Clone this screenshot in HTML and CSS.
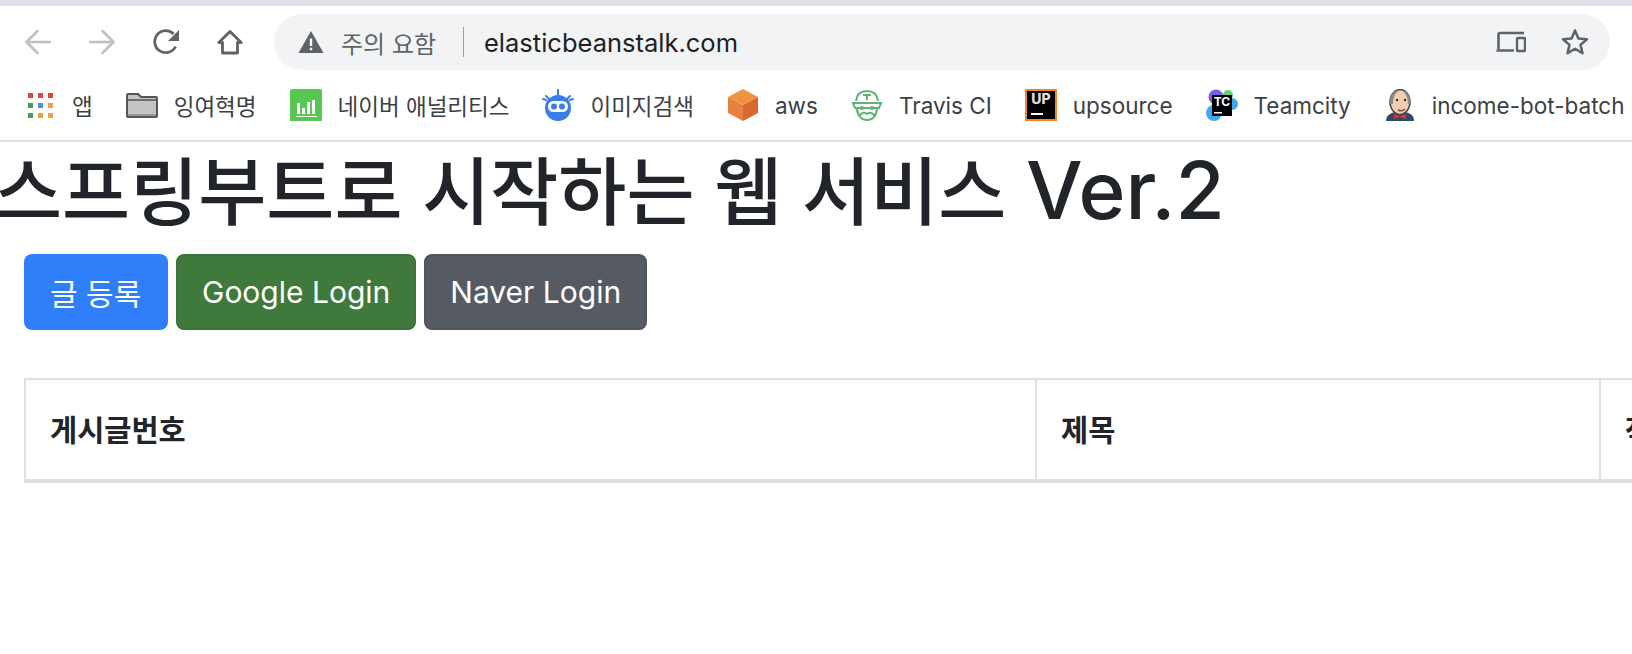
FILE: index.html
```html
<!DOCTYPE html>
<html lang="ko">
  <head>
    <title>스프링부트로 시작하는 웹 서비스 Ver.2</title>
    <meta name="viewport" content="width=device-width, initial-scale=1.0">
    <link rel="stylesheet" href="styles.css">
  </head>
  <body>
    <div class="tabstrip"></div>
    <!-- address bar -->
    <div class="toolbar">
      <div class="navbtns">
        <svg class="navicon" viewBox="0 0 26 26"><path d="M25 13H2M12.5 2 1.5 13l11 11" fill="none" stroke="#bfc0c2" stroke-width="2.6" stroke-linecap="round" stroke-linejoin="round"/></svg>
        <svg class="navicon" viewBox="0 0 26 26"><path d="M1 13h23M13.5 2l11 11-11 11" fill="none" stroke="#bfc0c2" stroke-width="2.6" stroke-linecap="round" stroke-linejoin="round"/></svg>
        <svg class="navicon" viewBox="0 0 26 26"><path d="M22.6 17.5A11 11 0 1 1 20.6 5" fill="none" stroke="#5f6368" stroke-width="2.8"/><path d="M26 1v11H15z" fill="#5f6368"/></svg>
        <svg class="navicon" viewBox="0 0 26 26"><path d="M13 2.5 1.8 13.5h3.7V24h15V13.5h3.7zM13 2.5" fill="none" stroke="#5f6368" stroke-width="2.8" stroke-linejoin="round"/></svg>
      </div>
      <div class="omnibox">
        <svg class="warnicon" viewBox="0 0 26 24"><path d="M13 1 .5 23h25z" fill="#5f6368"/><path d="M11.8 8.5h2.4v7.5h-2.4zM11.8 17.8h2.4v2.4h-2.4z" fill="#fff"/></svg>
        <span class="warntext">주의 요함</span>
        <span class="urlsep"></span>
        <span class="urltext">elasticbeanstalk.com</span>
        <svg class="devicon" viewBox="0 0 30 24"><path d="M2.500 19V4.500a1.500 1.500 0 0 1 1.500-1.500h24M.5 20.500h17.500" fill="none" stroke="#5f6368" stroke-width="2.600"/><rect x="21" y="8" width="8" height="13" rx="1" fill="none" stroke="#5f6368" stroke-width="2.400"/></svg>
        <svg class="staricon" viewBox="0 0 28 28"><path d="m14 2.500 3.400 8 8.600.7-6.500 5.700 2 8.400-7.500-4.500-7.500 4.500 2-8.400L2 11.200l8.600-.7z" fill="none" stroke="#5f6368" stroke-width="2.500" stroke-linejoin="round"/></svg>
      </div>
    </div>
    <!-- bookmarks -->
    <div class="bookmarks">
      <div class="bmitem">
        <svg class="bmicon" viewBox="0 0 32 32">
          <path d="M4 4h5v5H4z M14 4h5v5h-5z M24 4h5v5h-5z" fill="#e2453c"/>
          <path d="M4 14h5v5H4z" fill="#4d9b5c"/><path d="M14 14h5v5h-5z" fill="#4a8ff0"/><path d="M24 14h5v5h-5z" fill="#e8a33d"/>
          <path d="M4 24h5v5H4z" fill="#4d9b5c"/><path d="M14 24h5v5h-5z" fill="#e8a33d"/><path d="M24 24h5v5h-5z" fill="#e8a33d"/>
        </svg>
        <span>앱</span>
      </div>
      <div class="bmitem">
        <svg class="bmicon" viewBox="0 0 32 32"><path d="M1 27V6a1 1 0 0 1 1-1h10l3 3h15a1 1 0 0 1 1 1v18a1 1 0 0 1-1 1H2a1 1 0 0 1-1-1z" fill="#c4c4c4" stroke="#555" stroke-width="2"/><path d="M2 11h28" stroke="#555" stroke-width="1.500"/><path d="M2 25h28v2H2z" fill="#999"/></svg>
        <span>잉여혁명</span>
      </div>
      <div class="bmitem">
        <svg class="bmicon" viewBox="0 0 32 32"><rect width="32" height="33" rx="2" fill="#57c754"/><path d="M7 14h3v11H7zM12 19h3v6h-3zM17 13h3v12h-3zM22 11h3v14h-3zM6 27h21v1H6z" fill="#fff"/></svg>
        <span>네이버 애널리티스</span>
      </div>
      <div class="bmitem">
        <svg class="bmicon" viewBox="0 0 32 32">
          <path d="M16 1v6M4 7l4 4M28 7l-4 4M1 10l3 1M31 10l-3 1" stroke="#3b7de8" stroke-width="2" stroke-linecap="round"/>
          <circle cx="16" cy="19" r="13" fill="#3b7de8"/>
          <rect x="6" y="12" width="20" height="11" rx="5.500" fill="#fff"/>
          <circle cx="12" cy="17.500" r="3" fill="#3b7de8"/><circle cx="20" cy="17.500" r="3" fill="#3b7de8"/>
        </svg>
        <span>이미지검색</span>
      </div>
      <div class="bmitem">
        <svg class="bmicon" viewBox="0 0 32 32"><path d="M16 0 31 8 16 16 1 8z" fill="#f0933f"/><path d="M1 8 16 16v16L1 24z" fill="#e5823d"/><path d="M31 8 16 16v16l15-8z" fill="#d9672f"/></svg>
        <span>aws</span>
      </div>
      <div class="bmitem">
        <svg class="bmicon" viewBox="0 0 32 32">
          <g fill="none" stroke="#5fb271" stroke-width="2">
            <path d="M5 12C6 4 11 2 16 2s10 2 11 10"/><path d="M2 14h28l-2 5H4z"/>
            <path d="M6 19c0 7 4 12 10 12s10-5 10-12"/><path d="M8 27c3-4 6-4 8-2 2-2 5-2 8 2"/>
            <path d="M12 6h8M16 6v5"/>
          </g>
          <circle cx="11" cy="19" r="2" fill="#5fb271"/><circle cx="21" cy="19" r="2" fill="#5fb271"/>
        </svg>
        <span>Travis CI</span>
      </div>
      <div class="bmitem">
        <svg class="bmicon" viewBox="0 0 32 32"><rect x="1" y="1" width="30" height="30" fill="#000" stroke="#f4832b" stroke-width="2"/><text class="upglyph" x="16" y="15">UP</text><rect x="6" y="24" width="12" height="2" fill="#fff"/></svg>
        <span>upsource</span>
      </div>
      <div class="bmitem">
        <svg class="bmicon" viewBox="0 0 32 32">
          <circle cx="10" cy="8" r="7.500" fill="#7b5ce6"/><circle cx="22" cy="6" r="5" fill="#5fd46e"/>
          <circle cx="8" cy="24" r="8" fill="#3fa9f0"/><circle cx="26" cy="15" r="6" fill="#3fa9f0"/>
          <rect x="6" y="6" width="20" height="21" fill="#000"/>
          <text class="tcglyph" x="16" y="17">TC</text><rect x="8" y="23" width="8" height="1.500" fill="#fff"/>
        </svg>
        <span>Teamcity</span>
      </div>
      <div class="bmitem">
        <svg class="bmicon" viewBox="0 0 32 32">
          <path d="M2 32c0-6 5-8 9-9h10c5 1 9 3 9 9z" fill="#2f4a68"/>
          <ellipse cx="16" cy="13" rx="10" ry="12.500" fill="#f0cdb0" stroke="#444" stroke-width="1.500"/>
          <path d="M6 15C5 6 10 1 16 1c-5 2-7 8-7 14z" fill="#8a8a8a"/>
          <path d="M26 15c1-9-4-13-7-13 3 3 5 7 5 13z" fill="#8a8a8a"/>
          <path d="M14 21c2 1 5 1 7-1" fill="none" stroke="#7a4a3a" stroke-width="1.500"/>
          <circle cx="13" cy="11" r="1.200" fill="#333"/><circle cx="21" cy="11" r="1.200" fill="#333"/>
          <path d="M10 25l6 2 6-2v5l-6-2-6 2z" fill="#d33a2c"/>
        </svg>
        <span>income-bot-batch</span>
      </div>
    </div>

    <div class="page">
      <h1 class="title">스프링부트로 시작하는 웹 서비스 <span class="titlever">Ver.2</span></h1>
      <div class="btnrow">
        <a class="btn btnblue">글 등록</a>
        <a class="btn btngreen">Google Login</a>
        <a class="btn btngray">Naver Login</a>
      </div>
      <table class="posts">
        <thead>
          <tr>
            <th class="col0">게시글번호</th>
            <th class="col1">제목</th>
            <th class="col2">작성자</th>
            <th class="col3">최종수정일</th>
          </tr>
        </thead>
        <tbody></tbody>
      </table>
    </div>
  </body>
</html>
```

FILE: styles.css
```css
*{box-sizing:border-box;margin:0;padding:0;}
html,body{height:100%;overflow:hidden;}
body{background:#fff;color:#212529;font-family:"Inter","Noto Sans CJK KR",sans-serif;}
.tabstrip{height:6px;background:#dee1e6;}
.toolbar{height:64px;padding-top:8px;display:flex;align-items:flex-start;}
.navbtns{display:flex;gap:38px;padding:15px 0 0 25px;}
.navicon{width:26px;height:26px;display:block;}
.omnibox{width:1336px;height:56px;margin-left:31px;background:#f1f3f4;border-radius:28px;display:flex;align-items:center;padding-left:24px;}
.warnicon{width:26px;height:24px;}
.warntext{margin-left:17px;font-size:24px;color:#5f6368;width:105px;white-space:nowrap;}
.urlsep{width:1px;height:30px;margin-left:17px;background:#9a9da1;}
.urltext{margin-left:20px;font-size:25.500px;color:#202124;}
.devicon{width:30px;height:24px;margin-left:auto;}
.staricon{width:28px;height:28px;margin-left:35px;margin-right:21px;}
.bookmarks{height:72px;border-bottom:2px solid #dfe1e5;display:flex;align-items:center;gap:33px;padding-left:24px;white-space:nowrap;}
.bmitem{display:flex;align-items:center;gap:16px;flex:none;font-size:22.500px;color:#3c4043;}
.bmicon{width:32px;height:32px;flex:none;display:block;}
.upglyph{font:800 14px "Inter",sans-serif;fill:#ddd;text-anchor:middle;}
.tcglyph{font:700 12px "Inter",sans-serif;fill:#fff;text-anchor:middle;}
.page{padding-left:24px;}
.title{margin:0 0 16px -30px;font-size:74px;font-weight:500;line-height:96px;height:96px;white-space:nowrap;}
.titlever{font-size:80px;}
.btnrow{display:flex;gap:8px;}
.btn{height:76px;padding:0 24px;border:2px solid transparent;border-radius:8px;color:#fff;font-size:30px;display:flex;align-items:center;white-space:nowrap;}
.btnblue{background:#2f7ffb;width:144px;}
.btngreen{background:#3f7a3c;border-color:#3a7238;}
.btngray{background:#565b63;border-color:#50555d;}
.posts{margin-top:48px;border-collapse:collapse;table-layout:fixed;width:2000px;}
.posts th{border:2px solid #dee2e6;border-bottom-width:4px;padding:24px;height:102px;text-align:left;font-size:29.500px;font-weight:700;line-height:48px;}
.col0{width:1011px;}
.col1{width:564px;}
.col2{width:200px;}
```
